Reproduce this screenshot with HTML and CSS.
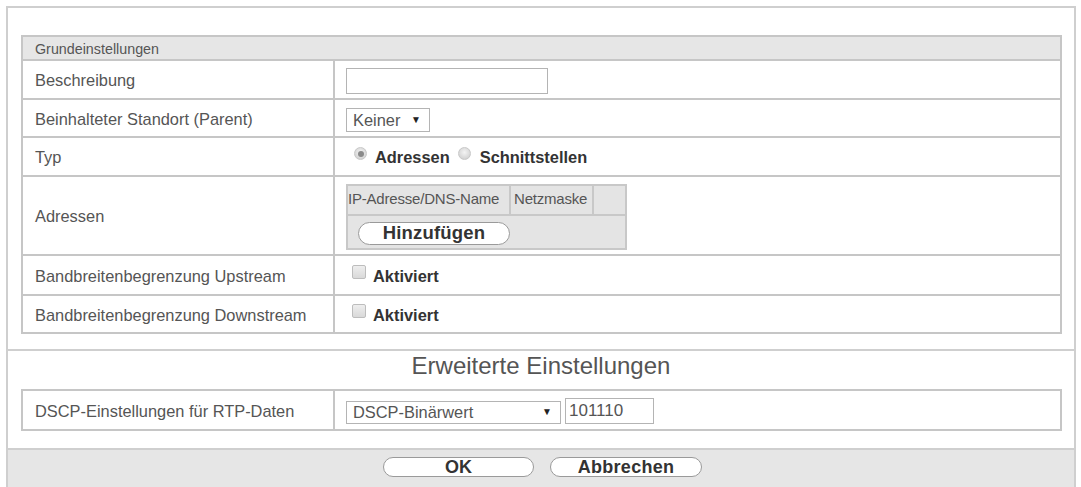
FILE: index.html
```html
<!DOCTYPE html>
<html lang="de">
<head>
<meta charset="utf-8">
<title>Standort</title>
<link rel="stylesheet" href="styles.css">
</head>
<body>
<div class="frame">
  <div class="main">
    <table class="grid">
      <tr class="r-head"><td colspan="2" class="head">Grundeinstellungen</td></tr>
      <tr class="r1">
        <td class="lbl">Beschreibung</td>
        <td class="val"><span class="textbox wide"></span></td>
      </tr>
      <tr class="r2">
        <td class="lbl">Beinhalteter Standort (Parent)</td>
        <td class="val"><span class="select small"><span>Keiner</span><span class="arrow">▼</span></span></td>
      </tr>
      <tr class="r3">
        <td class="lbl">Typ</td>
        <td class="val typ"><span class="radio on"></span><b>Adressen</b><span class="radio"></span><b>Schnittstellen</b></td>
      </tr>
      <tr class="r4">
        <td class="lbl">Adressen</td>
        <td class="val">
          <table class="addr">
            <tr class="addr-head"><td class="c1">IP-Adresse/DNS-Name</td><td class="c2">Netzmaske</td><td class="c3"></td></tr>
            <tr class="addr-body"><td colspan="3"><span class="btn add">Hinzufügen</span></td></tr>
          </table>
        </td>
      </tr>
      <tr class="r5">
        <td class="lbl">Bandbreitenbegrenzung Upstream</td>
        <td class="val chk"><span class="checkbox"></span><b>Aktiviert</b></td>
      </tr>
      <tr class="r6">
        <td class="lbl">Bandbreitenbegrenzung Downstream</td>
        <td class="val chk"><span class="checkbox"></span><b>Aktiviert</b></td>
      </tr>
    </table>
  </div>
  <div class="section-title">Erweiterte Einstellungen</div>
  <div class="main second">
    <table class="grid">
      <tr class="r7">
        <td class="lbl">DSCP-Einstellungen für RTP-Daten</td>
        <td class="val dscp"><span class="select large"><span>DSCP-Binärwert</span><span class="arrow">▼</span></span><span class="textbox num">101110</span></td>
      </tr>
    </table>
  </div>
  <div class="footer">
    <span class="btn ok">OK</span>
    <span class="btn cancel">Abbrechen</span>
  </div>
</div>
</body>
</html>
```

FILE: styles.css
```css
* { box-sizing: border-box; }
html, body { margin: 0; padding: 0; background: #fff; }
body {
  font-family: "Liberation Sans", Arial, sans-serif;
  color: #555;
  font-size: 16.4px;
}
.frame {
  margin: 6px 0 0 6px;
  width: 1070px;
  height: 490px;
  border: 2px solid #cfcfcf;
  border-bottom: none;
  display: flex;
  flex-direction: column;
}
.main {
  padding: 27px 12px 15px 13px;
  border-bottom: 2px solid #cfcfcf;
}
.main.second {
  padding-top: 0;
  padding-bottom: 17px;
}
.grid {
  width: 1041px;
  border-collapse: separate;
  border-spacing: 0;
  border-top: 2px solid #c6c6c6;
  border-left: 2px solid #c6c6c6;
}
.grid td {
  border-right: 2px solid #c6c6c6;
  border-bottom: 2px solid #c6c6c6;
  padding: 0;
  vertical-align: middle;
  line-height: 18px;
}
.grid td.head {
  background: #e6e6e6;
  height: 24px;
  font-size: 14.3px;
  padding-left: 12px;
  padding-top: 1px;
}
.grid td.lbl {
  width: 312px;
  padding-left: 12px;
  padding-top: 1px;
}
.grid td.val { padding-left: 11px; }
.r1 td { height: 39px; }
.r2 td { height: 38px; }
.r3 td { height: 39px; }
.r4 td { height: 79px; }
.r5 td { height: 40px; }
.r6 td { height: 38px; }
.r7 td { height: 40px; }

.textbox {
  display: inline-block;
  vertical-align: middle;
  border: 1px solid #b4b4b4;
  background: #fff;
  height: 26px;
}
.textbox.wide { width: 202px; margin-top: 3px; }
.textbox.num {
  width: 89px;
  margin-left: 4px;
  padding: 3px 0 0 3px;
  color: #555;
  font-size: 17px;
  margin-top: 1px;
}
.select {
  display: inline-flex;
  align-items: center;
  justify-content: space-between;
  vertical-align: middle;
  border: 1px solid #b4b4b4;
  background: #fff;
  height: 24px;
  padding: 0 8px 0 6px;
  color: #555;
  margin-top: 3px;
}
.select.small { width: 84px; }
.select.large { width: 215px; height: 23px; margin-top: 4px; }
.arrow { font-size: 10px; color: #222; }

.typ, .chk { padding-top: 5px; }
.typ b, .chk b { font-weight: bold; color: #333; font-size: 16.4px; vertical-align: middle; }
.typ b { margin-right: 4px; margin-left: 1px; }
.radio {
  display: inline-block;
  vertical-align: middle;
  width: 13px;
  height: 13px;
  border-radius: 50%;
  background: radial-gradient(circle at 50% 40%, #f4f4f4 0%, #d6d6d6 70%, #c4c4c4 100%);
  border: 1px solid #c8c8c8;
  position: relative;
  margin: -7px 7px 0 8px;
}
.radio + b + .radio { margin-left: 4px; margin-right: 8px; }
.radio.on::after {
  content: "";
  position: absolute;
  left: 2.5px; top: 2.5px;
  width: 6px; height: 6px;
  border-radius: 50%;
  background: #8a8a8a;
}
.checkbox {
  display: inline-block;
  vertical-align: middle;
  width: 14px;
  height: 14px;
  border: 1px solid #bdbdbd;
  border-radius: 2px;
  background: linear-gradient(#eee, #d9d9d9);
  margin: -8px 7px 0 6px;
}

.addr {
  border-collapse: separate;
  border-spacing: 0;
  background: #e4e4e4;
  border-top: 2px solid #c8c8c8;
  border-left: 2px solid #c8c8c8;
  width: 281px;
  margin-top: 2px;
}
.addr td {
  border-right: 2px solid #c8c8c8;
  border-bottom: 2px solid #c8c8c8;
  font-size: 15px;
  color: #555;
  padding: 0;
}
.addr-head td { height: 30px; padding: 0 0 2px 0; white-space: nowrap; letter-spacing: -0.2px; }
.addr .c1 { width: 163px; }
.addr .c2 { width: 83px; padding-left: 3px; }
.addr-body td { height: 34px; padding: 3px 0 0 10px; }

.btn {
  display: inline-flex;
  align-items: center;
  justify-content: center;
  border: 1px solid #9a9a9a;
  border-radius: 12px;
  background: #fff;
  color: #333;
  font-weight: bold;
}
.btn.add {
  width: 152px;
  height: 23px;
  font-size: 18.5px;
  letter-spacing: 0.2px;
}

.section-title {
  height: 38px;
  text-align: center;
  font-size: 24px;
  line-height: 28px;
  color: #555;
  padding-top: 1px;
}

.footer {
  flex: 1;
  background: #e6e6e6;
  display: flex;
  justify-content: center;
  align-items: flex-start;
  gap: 16px;
  padding-top: 7px;
}
.btn.ok, .btn.cancel {
  width: 151px;
  height: 20px;
  font-size: 18px;
  border-radius: 10px;
  margin-left: 3px;
}
.btn.cancel { width: 152px; margin-left: 0; letter-spacing: 0.3px; }
```
